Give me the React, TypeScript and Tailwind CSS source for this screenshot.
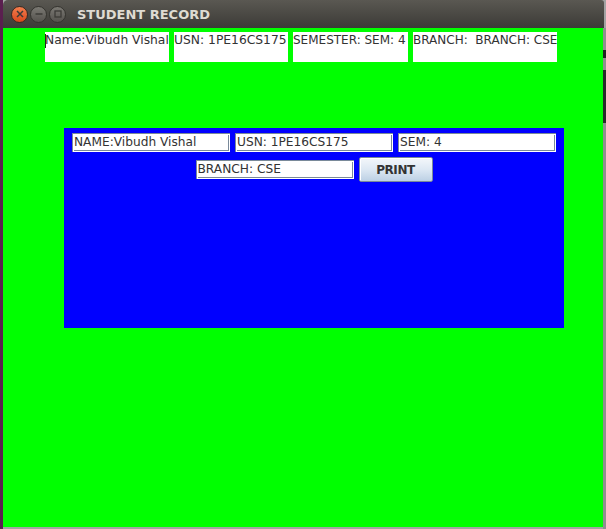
import React from "react";

const font = { fontFamily: '"DejaVu Sans", Verdana, sans-serif' };

function Field({ text, w }: { text: string; w: string }) {
  return (
    <div
      className={`${w} h-[19px] bg-white pl-[2px] text-[12.2px] leading-[19px] text-[#333] whitespace-pre overflow-hidden shadow-[inset_1px_1px_0_#7a8a99,inset_-1px_-1px_0_#ffffff,inset_2px_2px_0_#ffffff,inset_-2px_-2px_0_#7a8a99]`}
    >
      {text}
    </div>
  );
}

function TopLabel({ text, w, size, caret }: { text: string; w: string; size: string; caret?: boolean }) {
  return (
    <div className={`${w} ${size} h-[30px] bg-white relative leading-[14px] pt-[1px] text-[#333] whitespace-pre overflow-hidden`}>
      {caret && <span className="absolute left-0 top-[2px] w-[1px] h-[14px] bg-[#222]" />}
      {text}
    </div>
  );
}

export default function App() {
  return (
    <div className="w-[606px] h-[529px] bg-[#5a1f4f] flex overflow-hidden" style={font}>
      <div className="ml-[3px] w-[603px] h-full flex flex-col bg-[#a3a3a3]">
        {/* title bar */}
        <div className="h-[28px] w-[601px] rounded-tl-[5px] rounded-tr-[3px] bg-gradient-to-b from-[#5a5852] to-[#3c3b37] flex items-center pl-[8px]">
          <div className="w-[17px] h-[17px] rounded-full bg-gradient-to-b from-[#f37d4d] to-[#d9461a] border border-[#3a2a22] flex items-center justify-center">
            <svg width="8" height="8" viewBox="0 0 8 8">
              <path d="M1 1L7 7M7 1L1 7" stroke="#3c3b37" strokeWidth="1.5" />
            </svg>
          </div>
          <div className="ml-[2px] w-[17px] h-[17px] rounded-full bg-gradient-to-b from-[#7b7973] to-[#55534e] border border-[#35342f] flex items-center justify-center">
            <svg width="8" height="8" viewBox="0 0 8 8">
              <path d="M0.5 4H7.5" stroke="#3c3b37" strokeWidth="1.5" />
            </svg>
          </div>
          <div className="ml-[2px] w-[17px] h-[17px] rounded-full bg-gradient-to-b from-[#7b7973] to-[#55534e] border border-[#35342f] flex items-center justify-center">
            <svg width="8" height="8" viewBox="0 0 8 8">
              <rect x="1" y="1" width="6" height="6" fill="none" stroke="#3c3b37" strokeWidth="1.3" />
            </svg>
          </div>
          <div className="ml-[11px] text-[13px] font-bold text-[#dfdbd2] leading-none">STUDENT RECORD</div>
        </div>
        <div className="flex flex-1">
          {/* green content */}
          <div className="w-[600px] h-[499px] bg-[#00ff00] flex flex-col">
            <div className="flex gap-[5px] pl-[42px] pt-[4px]">
              <TopLabel text="Name:Vibudh Vishal" w="w-[124px]" size="text-[12.3px]" caret />
              <TopLabel text="USN: 1PE16CS175" w="w-[114px]" size="text-[12.3px]" />
              <TopLabel text="SEMESTER: SEM: 4" w="w-[115px]" size="text-[12px]" />
              <TopLabel text="BRANCH:  BRANCH: CSE" w="w-[144px]" size="text-[12px]" />
            </div>
            <div className="ml-[61px] mt-[66px] w-[500px] h-[200px] bg-[#0000ff] flex flex-col items-center pt-[5px] gap-[5px]">
              <div className="flex gap-[5px]">
                <Field text="NAME:Vibudh Vishal" w="w-[158px]" />
                <Field text="USN: 1PE16CS175" w="w-[158px]" />
                <Field text="SEM: 4" w="w-[158px]" />
              </div>
              <div className="flex gap-[5px] items-center">
                <Field text="BRANCH: CSE" w="w-[158px]" />
                <div className="w-[74px] h-[25px] rounded-[2px] border border-[#7a8a99] bg-gradient-to-b from-[#f4f7fa] via-[#dde8f3] to-[#bcd0e4] shadow-[inset_1px_1px_0_#ffffff] flex items-center justify-center text-[12px] font-bold tracking-[-0.4px] text-[#333]">
                  PRINT
                </div>
              </div>
            </div>
          </div>
          <div className="flex-1 flex flex-col bg-[#8f8f8f]">
            <div className="h-[22px]" />
            <div className="h-[8px] bg-[#222]" />
            <div className="h-[12px]" />
            <div className="h-[53px] bg-[#2a2a2a]" />
          </div>
        </div>
      </div>
    </div>
  );
}
